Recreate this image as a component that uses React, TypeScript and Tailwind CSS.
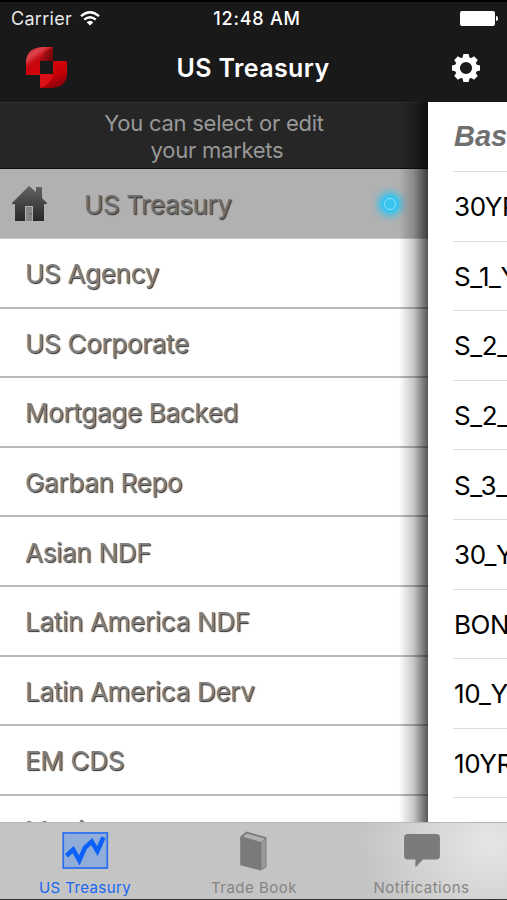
const markets = [
  'US Agency',
  'US Corporate',
  'Mortgage Backed',
  'Garban Repo',
  'Asian NDF',
  'Latin America NDF',
  'Latin America Derv',
  'EM CDS',
  'Muni',
];

const instruments = ['30YR', 'S_1_YR', 'S_2_YR', 'S_2_YR', 'S_3_YR', '30_YR', 'BOND', '10_YR', '10YR'];

function Logo() {
  return (
    <svg width="44" height="44" viewBox="0 0 44 44" className="block">
      <defs>
        <linearGradient id="fold" x1="0" y1="0" x2="0.7" y2="1">
          <stop offset="0" stopColor="#b8141c" />
          <stop offset="0.3" stopColor="#dc444c" />
          <stop offset="0.5" stopColor="#c80810" />
          <stop offset="1" stopColor="#d40008" />
        </linearGradient>
        <linearGradient id="dark" x1="0" y1="0.2" x2="1" y2="0.8">
          <stop offset="0" stopColor="#c0141c" />
          <stop offset="1" stopColor="#6e0508" />
        </linearGradient>
        <linearGradient id="low" x1="0.2" y1="0" x2="0.7" y2="1">
          <stop offset="0" stopColor="#d80008" />
          <stop offset="0.6" stopColor="#c40008" />
          <stop offset="1" stopColor="#7e0408" />
        </linearGradient>
      </defs>
      <path d="M1 29V15Q2 2 17 1H28L15 15V29Z" fill="url(#fold)" />
      <path d="M28 1V15H15Q17 5 28 1Z" fill="url(#dark)" />
      <path d="M42 15V29Q41 41 27 42H15L28 28V15Z" fill="url(#low)" />
      <path d="M15 42V28H28Q26 38 15 42Z" fill="#dc1018" />
    </svg>
  );
}

function StatusBar() {
  return (
    <div className="flex h-[34px] items-center border-t-2 border-black text-[18px] text-white">
      <div className="flex flex-1 items-center gap-[8px] pl-[11px]">
        <span className="tracking-[0.3px] text-[#e8e8e8]">Carrier</span>
        <svg width="20" height="15" viewBox="0 0 20 15" fill="none" stroke="#fff" strokeWidth="2.3">
          <path d="M1 5.2Q10-2.6 19 5.2" />
          <path d="M4.2 8.6Q10 3.8 15.8 8.6" />
          <path d="M10 14.6L6.6 11.2Q10 8.2 13.4 11.2Z" fill="#fff" stroke="none" />
        </svg>
      </div>
      <span className="pl-[5px] font-medium tracking-[0.8px]">12:48 AM</span>
      <div className="flex flex-1 items-center justify-end gap-px pr-[9px]">
        <span className="h-[15px] w-[35px] rounded-[2px] bg-white" />
        <span className="h-[5px] w-[2px] rounded-r-full bg-white" />
      </div>
    </div>
  );
}

function House() {
  return (
    <svg width="36" height="36" viewBox="0 0 36 36">
      <defs>
        <linearGradient id="house" x1="0" y1="0" x2="0" y2="1">
          <stop offset="0" stopColor="#626262" />
          <stop offset="1" stopColor="#282828" />
        </linearGradient>
      </defs>
      <path
        fill="url(#house)"
        fillRule="evenodd"
        d="M0 17L17 0L24 6V1H30V12L35 17V18H32V35H21V20H13V35H3V18H0Z"
      />
      <path d="M14 21H20V35H14Z" fill="#858585" />
      <circle cx="18.6" cy="28" r="0.8" fill="#555" />
    </svg>
  );
}

function Gear() {
  return (
    <svg width="30" height="30" viewBox="-15 -15 30 30" fill="#fff">
      <circle r="8.6" fill="none" stroke="#fff" strokeWidth="5" />
      {[0, 45, 90, 135, 180, 225, 270, 315].map((angle) => (
        <path key={angle} d="M-3.8-9L-2.6-14H2.6L3.8-9Z" transform={`rotate(${angle})`} />
      ))}
    </svg>
  );
}

function ChartIcon() {
  return (
    <svg width="49" height="39" viewBox="0 0 49 39">
      <rect x="1" y="1" width="46.5" height="37" fill="#8fadd8" stroke="#2a6ef0" strokeWidth="1.8" />
      <path d="M4.500 25L11.500 18.500L18 30L24 16.500L31 10L37 20L43.500 5.500" fill="none" stroke="#0b62fb" strokeWidth="4.800" />
    </svg>
  );
}

function BookIcon() {
  return (
    <svg width="30" height="42" viewBox="0 0 30 42">
      <path d="M.5 6L7 .5L28 6.500V38L22 41.500L.5 36Z" fill="#7a7a7a" />
      <path d="M3.500 6L7.500 2.500L26.500 8L22.500 11.500Z" fill="#b0b0b0" />
      <path d="M22.800 12L27 8.300V37.500L22.800 40Z" fill="#9b9b9b" />
    </svg>
  );
}

function ChatIcon() {
  return (
    <svg width="38" height="36" viewBox="0 0 38 36">
      <path d="M4 0H34Q38 0 38 4V23Q38 27 34 27H20L12 35.500V27H4Q0 27 0 23V4Q0 0 4 0Z" fill="#7b7b7b" />
    </svg>
  );
}

export default function App() {
  return (
    <div className="flex h-[900px] w-[507px] flex-col overflow-hidden bg-[#191919] font-['Inter','Liberation_Sans',sans-serif]">
      <header className="h-[102px] shrink-0">
        <StatusBar />
        <div className="flex h-[68px] items-center">
          <div className="flex-1 pl-[25px]"><Logo /></div>
          <h1 className="text-[25px] font-semibold leading-[68px] tracking-[0.4px] text-white">US Treasury</h1>
          <div className="flex flex-1 justify-end pr-[26px]"><Gear /></div>
        </div>
      </header>

      <main className="flex h-[720px] shrink-0 overflow-hidden">
        <section className="relative w-[428px] shrink-0 bg-white">
          <div className="h-[67px] border-b border-t border-b-[#0c0c0c] border-t-[#303030] bg-[#262626] pt-[7px] text-center text-[22px] leading-[26.500px] text-[#989898]">
            <p className="tracking-[-0.25px]">You can select or edit</p>
            <p className="pl-[6px] tracking-[-0.25px]">your markets</p>
          </div>
          <div className="flex h-[70px] items-center border-b border-[#c8c8c8] bg-[#b1b1b1] pl-3">
            <House />
            <span className="mt-px ml-[36px] text-[26px] tracking-[-0.4px] text-[#6e6e6e] [text-shadow:1px_1px_1px_#303030]">US Treasury</span>
            <span className="ml-auto mr-[29px] mt-px flex size-[18px] items-center justify-center rounded-full bg-[#38c4ee] shadow-[0_0_6px_4px_#4fbfe0]">
              <span className="size-[12px] rounded-full border-[1.500px] border-[#8adcff]" />
            </span>
          </div>
          {markets.map((label) => (
            <div key={label} className="flex h-[69.600px] items-center border-b-2 border-[#b9b9b9] pl-[25px] pt-[2px]">
              <span className="text-[26px] tracking-[-0.3px] text-[#808080] [text-shadow:1px_1px_1px_#303030]">{label}</span>
            </div>
          ))}
          <div className="absolute inset-y-0 right-0 w-[29px] bg-linear-to-r from-transparent via-black/22 to-black/66" />
        </section>

        <section className="w-[79px] shrink-0 overflow-hidden bg-white pl-[25px]">
          <div className="flex h-[70px] items-center border-b border-[#dedede] pl-px font-['Liberation_Sans',Arial,sans-serif] text-[29px] font-bold italic text-[#707070]">Basis</div>
          {instruments.map((name, i) => (
            <div key={i} className="flex h-[69.600px] items-center whitespace-nowrap border-b border-[#dcdcdc] pl-px pt-px text-[26px] tracking-[-0.4px] text-black">{name}</div>
          ))}
        </section>
      </main>

      <nav className="flex h-[77px] shrink-0 border-t border-[#b8b8b8] bg-[#c4c4c4] bg-[radial-gradient(ellipse_130px_110px_at_490px_20px,#e6e6e6,#c4c4c4)] text-[15px] text-[#858585]">
        <div className="flex w-[170px] flex-col items-center pt-[9px] text-[#1767f2]">
          <ChartIcon />
          <span className="mt-[8px] leading-[22px] tracking-[0.4px]">US Treasury</span>
        </div>
        <div className="flex w-[168px] flex-col items-center pt-[8px]">
          <BookIcon />
          <span className="mt-[6px] leading-[22px] tracking-[0.5px]">Trade Book</span>
        </div>
        <div className="flex w-[167px] flex-col items-center pt-[11px]">
          <ChatIcon />
          <span className="mt-[9px] leading-[22px] tracking-[0.5px]">Notifications</span>
        </div>
      </nav>
      <div className="h-px bg-[#303030]" />
    </div>
  );
}
